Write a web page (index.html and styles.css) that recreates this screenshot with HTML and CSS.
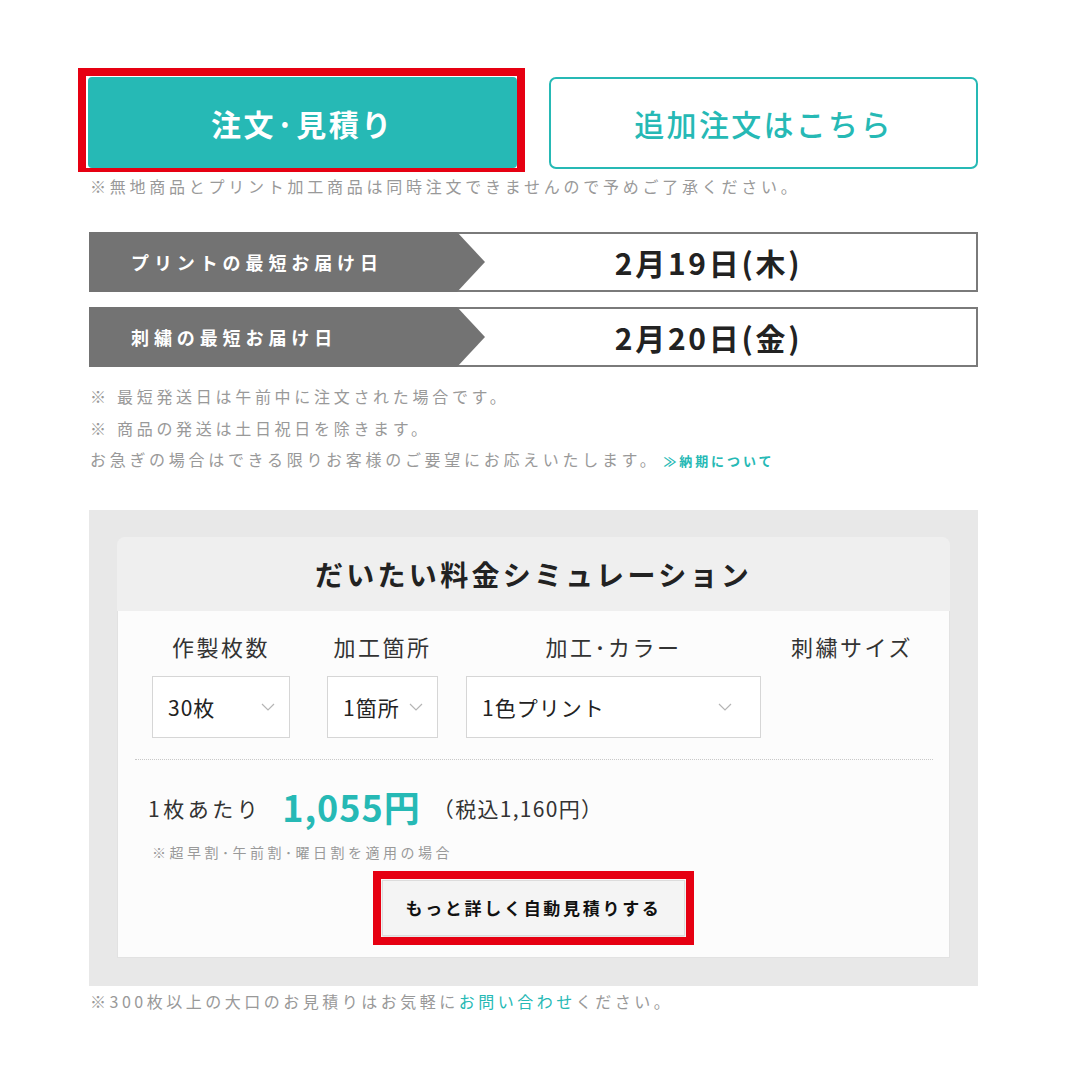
FILE: index.html
```html
<!DOCTYPE html>
<html lang="ja">
<head>
<meta charset="utf-8">
<title>注文・見積り</title>
<link rel="stylesheet" href="styles.css">
</head>
<body>
<div class="page">
  <div class="actions">
    <a class="btn-primary highlight-a">注文·見積り</a>
    <a class="btn-outline">追加注文はこちら</a>
  </div>
  <p class="note">※無地商品とプリント加工商品は同時注文できませんので予めご了承ください。</p>

  <div class="delivery">
    <div class="row">
      <div class="label">プリントの最短お届け日</div>
      <div class="date">2月19日(木)</div>
    </div>
    <div class="row">
      <div class="label">刺繍の最短お届け日</div>
      <div class="date">2月20日(金)</div>
    </div>
  </div>

  <ul class="notes">
    <li>※ 最短発送日は午前中に注文された場合です。</li>
    <li>※ 商品の発送は土日祝日を除きます。</li>
    <li>お急ぎの場合はできる限りお客様のご要望にお応えいたします。<a class="notes-link">≫納期について</a></li>
  </ul>

  <section class="sim-panel">
    <div class="sim-card">
      <h2 class="sim-title">だいたい料金シミュレーション</h2>
      <div class="sim-body">
        <div class="fields">
          <div class="field f1">
            <div class="field-label">作製枚数</div>
            <div class="select w1"><span>30枚</span><svg class="chev" width="14" height="8" viewBox="0 0 14 8"><polyline points="1,1 7,7 13,1" fill="none" stroke="#b5b5b5" stroke-width="1.2"/></svg></div>
          </div>
          <div class="field f2">
            <div class="field-label">加工箇所</div>
            <div class="select w2"><span>1箇所</span><svg class="chev" width="14" height="8" viewBox="0 0 14 8"><polyline points="1,1 7,7 13,1" fill="none" stroke="#b5b5b5" stroke-width="1.2"/></svg></div>
          </div>
          <div class="field f3">
            <div class="field-label">加工･カラー</div>
            <div class="select w3"><span>1色プリント</span><svg class="chev" width="14" height="8" viewBox="0 0 14 8"><polyline points="1,1 7,7 13,1" fill="none" stroke="#b5b5b5" stroke-width="1.2"/></svg></div>
          </div>
          <div class="field f4">
            <div class="field-label">刺繍サイズ</div>
          </div>
        </div>
        <div class="divider"></div>
        <div class="price">
          <span class="per">1枚あたり</span><span class="amount">1,055円</span><span class="tax">（税込1,160円）</span>
        </div>
        <p class="price-note">※超早割･午前割･曜日割を適用の場合</p>
        <div class="btn-wrap">
          <a class="btn-detail">もっと詳しく自動見積りする</a>
        </div>
      </div>
    </div>
  </section>

  <p class="note bottom-note">※300枚以上の大口のお見積りはお気軽に<a class="teal-link">お問い合わせ</a>ください。</p>
</div>
</body>
</html>
```

FILE: styles.css
```css
* { box-sizing: border-box; }

body {
  margin: 0;
  background: #fff;
  font-family: "Noto Sans CJK JP", "Noto Sans", sans-serif;
  color: #333;
}

a { text-decoration: none; cursor: pointer; }

.page {
  width: 978px;
  padding: 77px 0 40px 89px;
}

.actions {
  display: grid;
  grid-template-columns: 429px 429px;
  column-gap: 32px;
  margin-left: -1px;
  align-items: start;
}

.btn-primary {
  position: relative;
  height: 91px;
  background: #26b9b5;
  color: #fff;
  font-size: 30px;
  font-weight: 700;
  letter-spacing: 2.5px;
  border-radius: 4px;
  display: flex;
  align-items: center;
  justify-content: center;
}

.highlight-a::after {
  content: "";
  position: absolute;
  top: -9px;
  left: -10px;
  right: -8px;
  bottom: -4px;
  border-style: solid;
  border-color: #e60012;
  border-width: 8px 8px 4px 8px;
}

.btn-outline {
  height: 92px;
  border: 2px solid #26b9b5;
  border-radius: 7px;
  color: #26b9b5;
  font-size: 30px;
  font-weight: 500;
  letter-spacing: 2.3px;
  display: flex;
  align-items: center;
  justify-content: center;
}

.note {
  margin: 7px 0 0 1px;
  font-size: 16px;
  line-height: 20px;
  letter-spacing: 3.75px;
  color: #999;
  white-space: nowrap;
}

.delivery {
  margin-top: 36px;
  display: flex;
  flex-direction: column;
  gap: 15px;
}

.row {
  display: flex;
  height: 60px;
}

.label {
  position: relative;
  width: 368px;
  background: #737373;
  color: #fff;
  font-size: 18px;
  font-weight: 700;
  letter-spacing: 4.9px;
  padding-left: 42px;
  display: flex;
  align-items: center;
}

.label::after {
  content: "";
  position: absolute;
  left: 100%;
  top: 0;
  border-left: 28px solid #737373;
  border-top: 30px solid transparent;
  border-bottom: 30px solid transparent;
}

.date {
  flex: 1;
  border: 2px solid #7a7a7a;
  border-left: 0;
  display: flex;
  align-items: center;
  justify-content: center;
  padding-right: 16px;
  font-size: 30px;
  font-weight: 700;
  letter-spacing: 2.7px;
  color: #222;
}

.notes {
  list-style: none;
  margin: 14px 0 0 1px;
  padding: 0;
  font-size: 16px;
  line-height: 31.5px;
  letter-spacing: 3.7px;
  color: #999;
  white-space: nowrap;
}

.notes-link {
  margin-left: 4px;
  font-size: 13px;
  font-weight: 700;
  letter-spacing: 2.9px;
  color: #26b9b5;
}

.sim-panel {
  margin-top: 33px;
  background: #e8e8e8;
  padding: 27px 28px 28px;
}

.sim-card {
  border-radius: 8px 8px 0 0;
}

.sim-title {
  margin: 0;
  height: 74px;
  background: #efefef;
  border-radius: 8px 8px 0 0;
  display: flex;
  align-items: center;
  justify-content: center;
  font-size: 28px;
  font-weight: 700;
  letter-spacing: 3.3px;
  color: #222;
}

.sim-body {
  background: #fcfcfc;
  border: 1px solid #e2e2e2;
  border-top: 0;
  padding: 20px 0 21px;
}

.fields {
  display: flex;
  padding-left: 34px;
}

.field {
  display: flex;
  flex-direction: column;
  align-items: center;
  gap: 15px;
}

.f2 { margin-left: 37px; }
.f3 { margin-left: 28px; }
.f4 { margin-left: 29px; width: 124px; }

.field-label {
  font-size: 22px;
  line-height: 30px;
  letter-spacing: 2.5px;
  color: #333;
  white-space: nowrap;
}

.select {
  height: 62px;
  background: #fff;
  border: 1px solid #d6d6d6;
  display: flex;
  align-items: center;
  justify-content: space-between;
  padding: 0 14px 0 15px;
  font-size: 21px;
  letter-spacing: 1px;
  color: #222;
  white-space: nowrap;
}

.w1 { width: 138px; }
.w2 { width: 111px; }
.w3 { width: 295px; padding-right: 28px; }

.chev { flex: none; }

.divider {
  margin: 21px 16px 0 17px;
  border-top: 1px dotted #c8c8c8;
}

.price {
  margin-top: 24px;
  padding-left: 30px;
  height: 44px;
  display: flex;
  align-items: center;
  color: #333;
  white-space: nowrap;
}

.per {
  font-size: 21px;
  letter-spacing: 3.5px;
  line-height: 30px;
  padding-top: 4px;
}

.amount {
  margin-left: 21px;
  font-size: 36px;
  font-weight: 700;
  letter-spacing: 1px;
  line-height: 44px;
  color: #26b9b5;
}

.tax {
  margin-left: 12px;
  font-size: 21px;
  letter-spacing: 1.3px;
  line-height: 30px;
  padding-top: 4px;
}

.price-note {
  margin: 14px 0 0 34px;
  font-size: 14px;
  line-height: 20px;
  letter-spacing: 3.5px;
  color: #999;
}

.btn-wrap {
  margin-top: 18px;
  display: flex;
  justify-content: center;
}

.btn-detail {
  position: relative;
  width: 303px;
  height: 56px;
  background: #f4f4f4;
  border: 1px solid #dcdcdc;
  box-shadow: 0 1px 2px rgba(0, 0, 0, 0.12);
  display: flex;
  align-items: center;
  justify-content: center;
  font-size: 17px;
  font-weight: 700;
  letter-spacing: 2.7px;
  color: #111;
}

.btn-detail::after {
  content: "";
  position: absolute;
  inset: -10px;
  border: 8px solid #e60012;
}

.bottom-note {
  margin-top: 5px;
  letter-spacing: 3.5px;
}

.teal-link {
  color: #26b9b5;
}
```
